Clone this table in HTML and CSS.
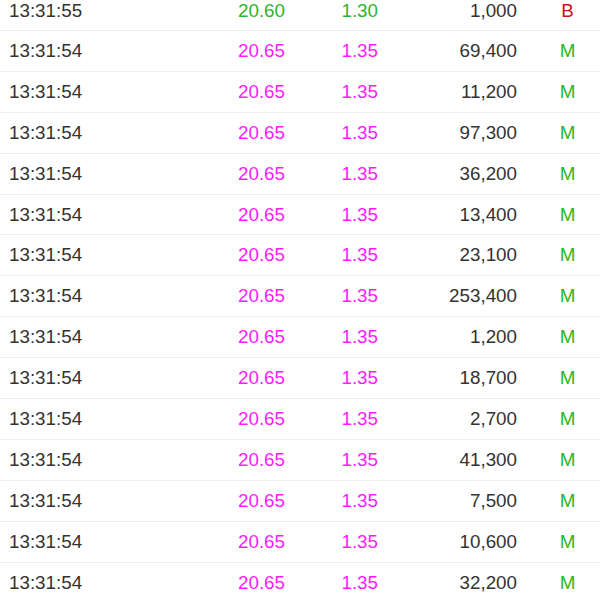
FILE: index.html
```html
<!DOCTYPE html>
<html>
<head>
<meta charset="utf-8">
<link rel="stylesheet" href="styles.css">
</head>
<body>
<div class="ticks">
  <div class="row first"><span class="time">13:31:55</span><span class="num down">20.60</span><span class="num down">1.30</span><span class="num vol">1,000</span><span class="flag buy">B</span></div>
  <div class="row"><span class="time">13:31:54</span><span class="num up">20.65</span><span class="num up">1.35</span><span class="num vol">69,400</span><span class="flag mid">M</span></div>
  <div class="row"><span class="time">13:31:54</span><span class="num up">20.65</span><span class="num up">1.35</span><span class="num vol">11,200</span><span class="flag mid">M</span></div>
  <div class="row"><span class="time">13:31:54</span><span class="num up">20.65</span><span class="num up">1.35</span><span class="num vol">97,300</span><span class="flag mid">M</span></div>
  <div class="row"><span class="time">13:31:54</span><span class="num up">20.65</span><span class="num up">1.35</span><span class="num vol">36,200</span><span class="flag mid">M</span></div>
  <div class="row"><span class="time">13:31:54</span><span class="num up">20.65</span><span class="num up">1.35</span><span class="num vol">13,400</span><span class="flag mid">M</span></div>
  <div class="row"><span class="time">13:31:54</span><span class="num up">20.65</span><span class="num up">1.35</span><span class="num vol">23,100</span><span class="flag mid">M</span></div>
  <div class="row"><span class="time">13:31:54</span><span class="num up">20.65</span><span class="num up">1.35</span><span class="num vol">253,400</span><span class="flag mid">M</span></div>
  <div class="row"><span class="time">13:31:54</span><span class="num up">20.65</span><span class="num up">1.35</span><span class="num vol">1,200</span><span class="flag mid">M</span></div>
  <div class="row"><span class="time">13:31:54</span><span class="num up">20.65</span><span class="num up">1.35</span><span class="num vol">18,700</span><span class="flag mid">M</span></div>
  <div class="row"><span class="time">13:31:54</span><span class="num up">20.65</span><span class="num up">1.35</span><span class="num vol">2,700</span><span class="flag mid">M</span></div>
  <div class="row"><span class="time">13:31:54</span><span class="num up">20.65</span><span class="num up">1.35</span><span class="num vol">41,300</span><span class="flag mid">M</span></div>
  <div class="row"><span class="time">13:31:54</span><span class="num up">20.65</span><span class="num up">1.35</span><span class="num vol">7,500</span><span class="flag mid">M</span></div>
  <div class="row"><span class="time">13:31:54</span><span class="num up">20.65</span><span class="num up">1.35</span><span class="num vol">10,600</span><span class="flag mid">M</span></div>
  <div class="row last"><span class="time">13:31:54</span><span class="num up">20.65</span><span class="num up">1.35</span><span class="num vol">32,200</span><span class="flag mid">M</span></div>
</div>
</body>
</html>
```
FILE: styles.css
```css
html, body {
  margin: 0;
  padding: 0;
  background: #ffffff;
  overflow: hidden;
}
body {
  font-family: "Liberation Sans", Arial, sans-serif;
  font-size: 18.8px;
  color: #333333;
}
.row {
  display: grid;
  grid-template-columns: 191px 85px 93px 139px 83px;
  padding-left: 9px;
  padding-top: 1px;
  height: 40.9px;
  box-sizing: border-box;
  border-bottom: 1px solid #efefef;
  line-height: 38.9px;
  white-space: nowrap;
}
.row.first {
  height: 31px;
  padding-top: 0;
  line-height: 21px;
}
.row.last {
  border-bottom: none;
}
.num {
  text-align: right;
}
.vol {
  color: #333333;
}
.up {
  color: #ff1aff;
}
.down {
  color: #2cb52c;
}
.flag {
  text-align: center;
  padding-left: 18px;
}
.buy {
  color: #d0101a;
}
.mid {
  color: #2cb52c;
}
```
